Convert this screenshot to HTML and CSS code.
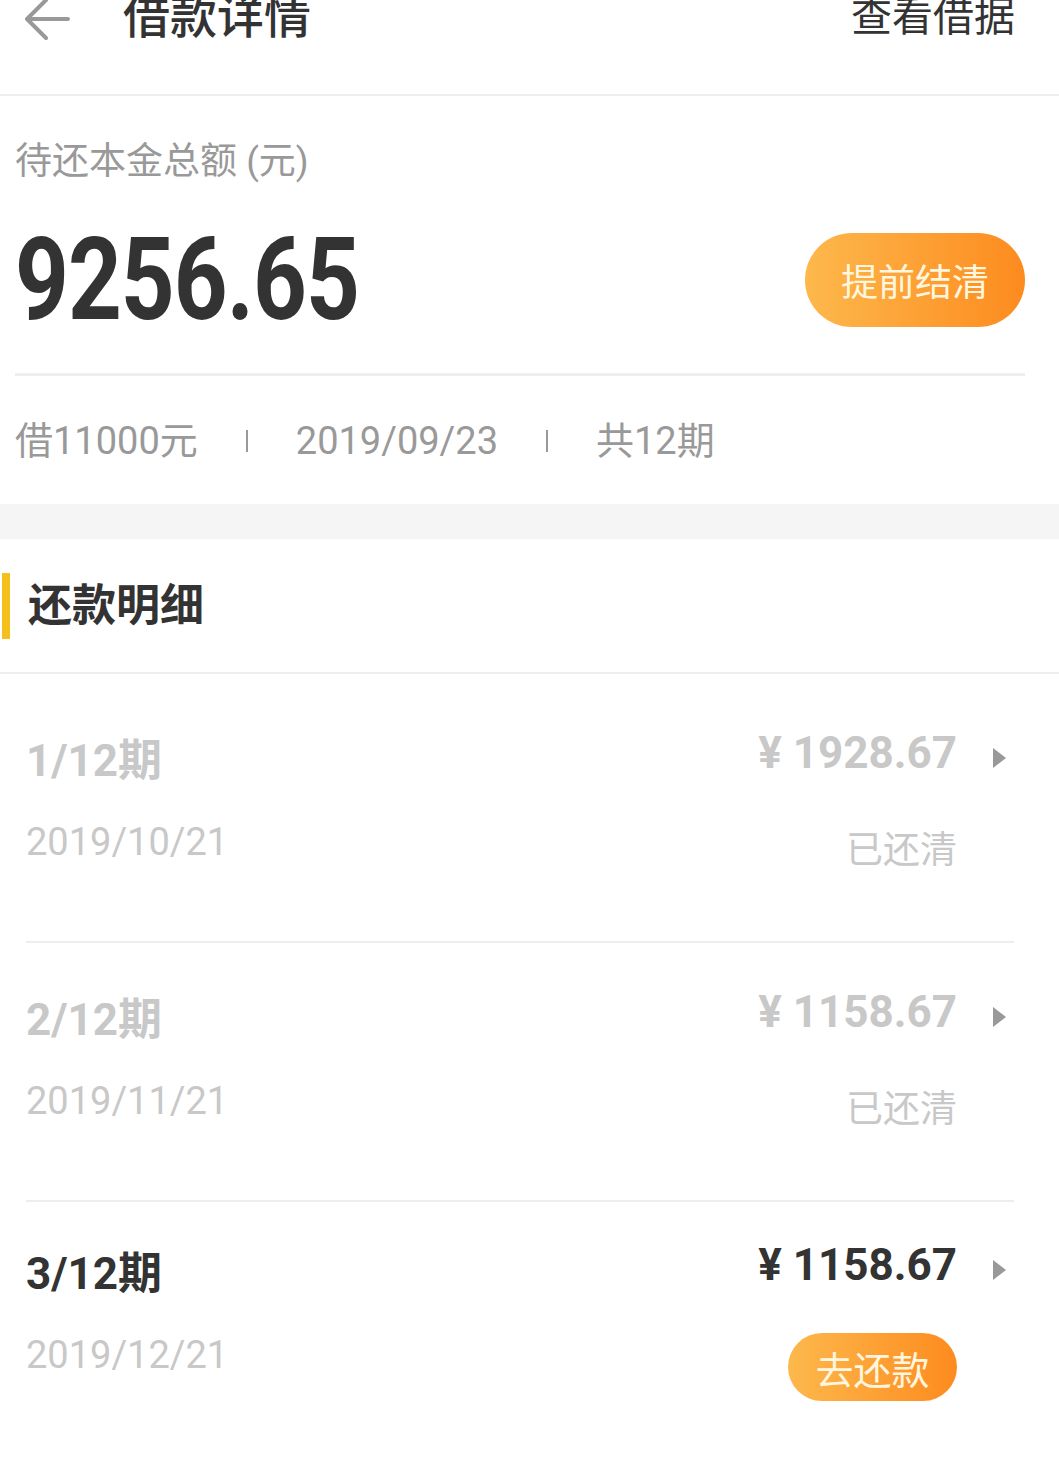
FILE: index.html
```html
<!DOCTYPE html>
<html>
<head>
<meta charset=utf-8>
<title>借款详情</title>
<link rel="stylesheet" href="styles.css">
</head>
<body>
<div class="topbar">
  <div class="topbar-left">
    <svg class="back" width="48" height="44" viewBox="0 0 48 44">
      <path d="M46 22 H6 M24 3 L5 22 L24 41" fill="none" stroke="#999" stroke-width="4" stroke-linecap="round" stroke-linejoin="round"/>
    </svg>
    <span class="title">借款详情</span>
  </div>
  <span class="topbar-link">查看借据</span>
</div>

<div class="summary">
  <div class="summary-label">待还本金总额 (元)</div>
  <div class="summary-main">
    <span class="amount">9256.65</span>
    <span class="btn btn-big">提前结清</span>
  </div>
  <div class="line"></div>
  <div class="summary-info">
    <span>借11000元</span><i class="sep"></i><span>2019/09/23</span><i class="sep"></i><span>共12期</span>
  </div>
</div>

<div class="gap"></div>

<div class="section-head">
  <span class="mark"></span>
  <span class="section-title">还款明细</span>
</div>

<div class="plan">
  <div class="plan-row done">
    <div class="plan-left">
      <div class="period">1/12期</div>
      <div class="date">2019/10/21</div>
    </div>
    <div class="plan-right">
      <div class="money"><span>¥ 1928.67</span><i class="arrow"></i></div>
      <div class="status">已还清</div>
    </div>
  </div>
  <div class="plan-row done">
    <div class="plan-left">
      <div class="period">2/12期</div>
      <div class="date">2019/11/21</div>
    </div>
    <div class="plan-right">
      <div class="money"><span>¥ 1158.67</span><i class="arrow"></i></div>
      <div class="status">已还清</div>
    </div>
  </div>
  <div class="plan-row current">
    <div class="plan-left">
      <div class="period">3/12期</div>
      <div class="date">2019/12/21</div>
    </div>
    <div class="plan-right">
      <div class="money"><span>¥ 1158.67</span><i class="arrow"></i></div>
      <span class="btn btn-small">去还款</span>
    </div>
  </div>
</div>
</body>
</html>
```

FILE: styles.css
```css
html, body
{
	margin:0;
	padding:0;
	background-color:#fff;
	font-family:Roboto, "Noto Sans CJK SC", sans-serif;
	color:#333;
}

/* header */
.topbar
{
	height:96px;
	box-sizing:border-box;
	padding:0 44px 52px 22px;
	border-bottom:2px solid #eee;
	display:flex;
	align-items:center;
	justify-content:space-between;
}
.topbar-left
{
	display:flex;
	align-items:center;
}
.back { display:block; margin-top:-4px; }
.title
{
	margin-left:53px;
	font-size:47px;
	line-height:56px;
	font-weight:500;
	margin-top:-8px;
}
.topbar-link
{
	font-size:41px;
	line-height:50px;
	margin-top:-8px;
}

/* summary */
.summary
{
	padding:41px 34px 38px 15px;
}
.summary-label
{
	font-size:37px;
	line-height:50px;
	color:#999;
}
.summary-main
{
	margin-top:46px;
	height:94px;
	display:flex;
	align-items:center;
	justify-content:space-between;
}
.amount
{
	display:inline-block;
	font-size:94px;
	line-height:94px;
	font-weight:700;
	color:#333;
	transform:scaleY(1.22);
	letter-spacing:-1px;
}
.btn
{
	display:inline-flex;
	align-items:center;
	justify-content:center;
	color:#fff6df;
	background:linear-gradient(to right, #fdb84c, #fd8b1f);
	border-radius:999px;
}
.btn-big
{
	width:220px;
	height:94px;
	font-size:37px;
}
.line
{
	margin-top:46px;
	height:3px;
	background-color:#eee;
}
.summary-info
{
	margin-top:40px;
	display:flex;
	align-items:center;
	font-size:38px;
	line-height:50px;
	color:#999;
}
.sep
{
	display:block;
	width:2px;
	height:22px;
	margin:0 48px;
	background-color:#999;
}
.gap
{
	height:35px;
	background-color:#f5f5f5;
}

/* repayment list */
.section-head
{
	height:133px;
	border-bottom:2px solid #eee;
	display:flex;
	align-items:center;
}
.mark
{
	display:block;
	width:8px;
	height:66px;
	margin-left:2px;
	background-color:#f5bf1c;
}
.section-title
{
	margin-left:18px;
	font-size:44px;
	font-weight:700;
	line-height:56px;
}
.plan
{
	padding-top:10px;
}
.plan-row
{
	height:257px;
	margin:0 45px 0 26px;
	border-bottom:2px solid #eee;
	display:flex;
	justify-content:space-between;
}
.plan-left { padding-top:52px; }
.plan-right
{
	padding-top:44px;
	padding-right:8px;
	display:flex;
	flex-direction:column;
	align-items:flex-end;
}
.period
{
	font-size:44px;
	line-height:50px;
	font-weight:700;
}
.date
{
	margin-top:34px;
	font-size:38px;
	line-height:44px;
	color:#c8c8c8;
}
.money
{
	display:flex;
	align-items:center;
	font-size:44px;
	line-height:50px;
	font-weight:700;
}
.arrow
{
	display:block;
	width:0;
	height:0;
	margin-left:36px;
	margin-top:10px;
	border-left:13px solid #999;
	border-top:10px solid transparent;
	border-bottom:10px solid transparent;
}
.status
{
	margin-top:51px;
	margin-right:49px;
	font-size:37px;
	line-height:44px;
	color:#c8c8c8;
}
.done .period,
.done .money { color:#c8c8c8; }

.current { border-bottom:none; }
.current .plan-left { padding-top:47px; }
.current .plan-right { padding-top:38px; }
.btn-small
{
	margin-top:43px;
	margin-right:49px;
	width:169px;
	height:68px;
	font-size:38px;
}
```
